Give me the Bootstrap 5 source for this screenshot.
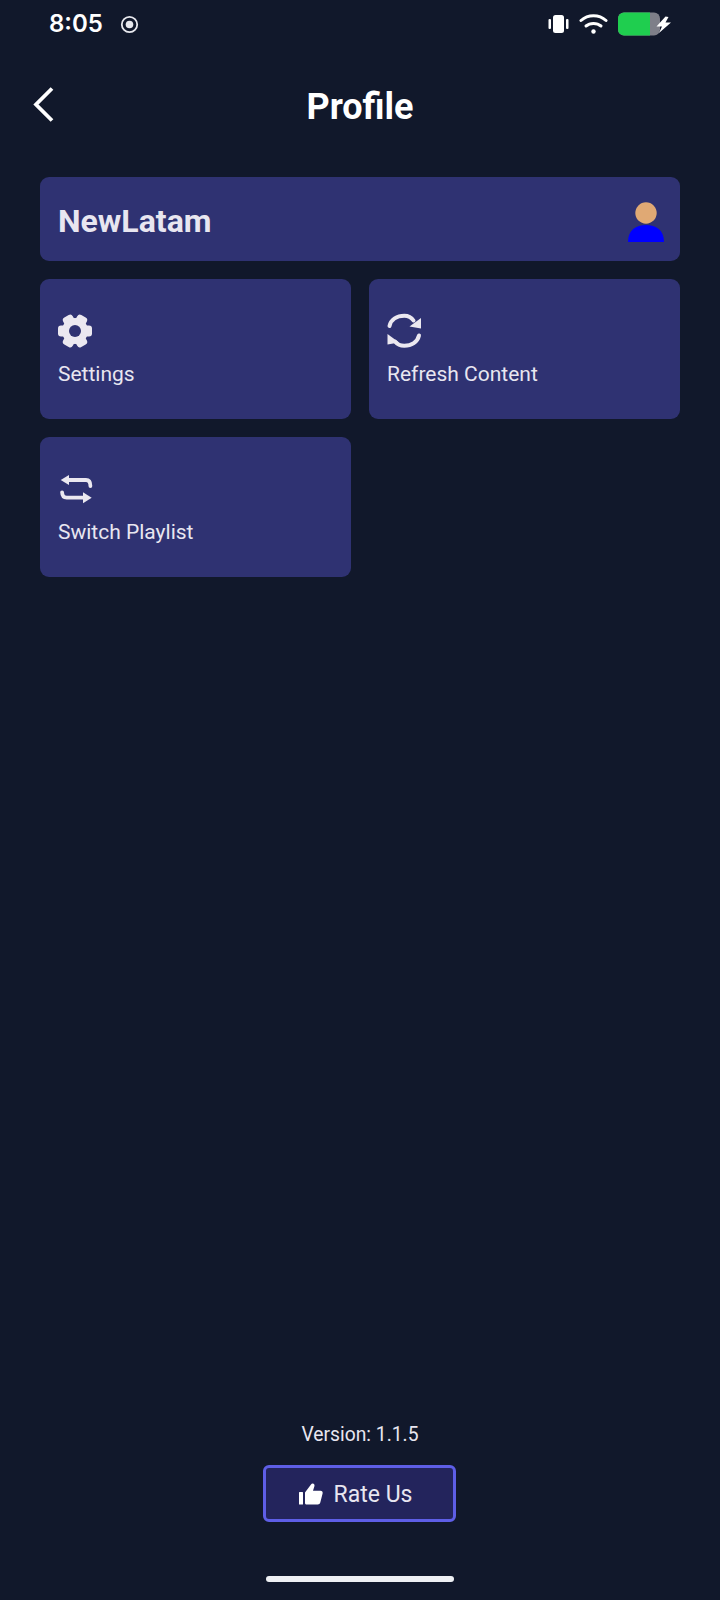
<!DOCTYPE html>
<html lang="en">
<head>
  <meta charset="UTF-8">
  <meta name="viewport" content="width=device-width, initial-scale=1.0">
  <title>Profile</title>
  <link href="https://cdn.jsdelivr.net/npm/bootstrap@5.3.0/dist/css/bootstrap.min.css" rel="stylesheet">
  <style>
    body {
      background-color: #11182b;
      font-family: Roboto, sans-serif;
      color: #e8e6f0;
    }
    .screen {
      height: 1600px;
      width: 720px;
      overflow: hidden;
    }
    .status-bar {
      height: 48px;
      padding: 0 49px 0 49px;
    }
    .status-left {
      gap: 17px;
    }
    .status-time {
      font-family: Inter, sans-serif;
      font-weight: 600;
      font-size: 24px;
      line-height: 1;
      color: #fff;
    }
    .status-right {
      gap: 10px;
    }
    .top-bar {
      height: 76px;
      margin-top: 21px;
    }
    .back-btn {
      position: absolute;
      left: 33px;
      top: 18px;
      line-height: 0;
    }
    .page-title {
      font-size: 36px;
      font-weight: 700;
      color: #fff;
      line-height: 1;
      margin: 0;
    }
    .content {
      padding: 32px 40px 0;
    }
    .user-box {
      height: 84px;
      background-color: #2f3272;
      border-radius: 9px;
      padding: 6px 16px 0 18px;
      margin-bottom: 18px;
    }
    .user-name {
      font-size: 32px;
      font-weight: 700;
      line-height: 1;
      margin-top: -3px;
    }
    .tiles {
      display: grid;
      grid-template-columns: 311px 311px;
      gap: 18px;
    }
    .tile {
      height: 140px;
      background-color: #2f3272;
      border-radius: 9px;
      padding: 33px 18px 0;
    }
    .tile svg {
      display: block;
      margin-bottom: 12px;
    }
    .tile-label {
      font-size: 21px;
      line-height: 28px;
    }
    .version {
      font-size: 19.3px;
      line-height: 22px;
      margin-bottom: 19px;
    }
    .rate-btn {
      width: 193px;
      height: 57px;
      background-color: #23245c;
      border: 3px solid #5e5ee6;
      border-radius: 6px;
      color: #e8e6f0;
      font-size: 23px;
      gap: 11px;
      padding: 4px 8px 0 0;
      margin-right: 1px;
    }
    .rate-btn svg {
      margin-top: -3px;
    }
    .home-bar {
      width: 188px;
      height: 6px;
      background-color: #eef0f4;
      border-radius: 3px;
      margin-top: 54px;
      margin-bottom: 18px;
    }
  </style>
</head>
<body>
  <div class="screen d-flex flex-column">
    <div class="status-bar d-flex align-items-center justify-content-between">
      <div class="status-left d-flex align-items-center">
        <span class="status-time">8:05</span>
        <svg width="19" height="19" viewBox="0 0 19 19"><circle cx="9.5" cy="9.5" r="7.7" fill="none" stroke="#e8e8ee" stroke-width="1.8"/><circle cx="9.5" cy="9.5" r="3.8" fill="#e8e8ee"/></svg>
      </div>
      <div class="status-right d-flex align-items-center">
        <svg width="21" height="20" viewBox="0 0 21 20" fill="#fff"><rect x="5" y="1" width="11" height="18" rx="2.5"/><rect x="0.5" y="5" width="2.5" height="10" rx="1"/><rect x="18" y="5" width="2.5" height="10" rx="1"/></svg>
        <svg width="29" height="22" viewBox="0 0 29 22" fill="none" stroke="#fff" stroke-width="3" stroke-linecap="round"><path d="M2 7.5C9 1 20 1 27 7.5"/><path d="M7 13C11 9.5 18 9.5 22 13"/><circle cx="14.5" cy="18.5" r="2.2" fill="#fff" stroke="none"/></svg>
        <svg width="53" height="24" viewBox="0 0 53 24"><rect x="0" y="0.5" width="42" height="23" rx="6" fill="#7e7f89"/><path d="M6 0.5H32V23.5H6A6 6 0 0 1 0 17.5V6.5A6 6 0 0 1 6 0.5Z" fill="#1fce4f"/><path d="M47.5 4.5L38.5 14.5H44L41 21L53 10.5H47.5L50.5 5Z" fill="#fff"/></svg>
      </div>
    </div>

    <div class="top-bar position-relative d-flex align-items-center justify-content-center">
      <div class="back-btn">
        <svg width="24" height="36" viewBox="0 0 24 36" fill="none" stroke="#fff" stroke-width="3.8"><path d="M19 1.5L3 17.5L19 33.5"/></svg>
      </div>
      <h1 class="page-title">Profile</h1>
    </div>

    <div class="content flex-grow-1">
      <div class="user-box d-flex align-items-center justify-content-between">
        <span class="user-name">NewLatam</span>
        <svg width="36" height="41" viewBox="0 0 36 41"><circle cx="18" cy="11" r="10.7" fill="#e0a974"/><path d="M0 40C0 28 8 23 18 23S36 28 36 40Z" fill="#0000ff"/></svg>
      </div>
      <div class="tiles">
        <div class="tile">
          <svg width="36" height="36" viewBox="0 0 36 36">
            <g fill="#ebe8f0">
              <circle cx="17" cy="19" r="13"/>
              <rect x="0" y="13.5" width="34" height="11" rx="3"/>
              <rect x="0" y="13.5" width="34" height="11" rx="3" transform="rotate(60 17 19)"/>
              <rect x="0" y="13.5" width="34" height="11" rx="3" transform="rotate(120 17 19)"/>
            </g>
            <circle cx="17" cy="19" r="6" fill="#2f3272"/>
          </svg>
          <div class="tile-label">Settings</div>
        </div>
        <div class="tile">
          <svg width="36" height="36" viewBox="0 0 36 36" fill="none" stroke="#ebe8f0" stroke-width="4" stroke-linecap="round"><path d="M2.5 14C4 7.5 10 3.8 17.3 3.8C21.5 3.8 24.5 5.5 26.5 8.5"/><path d="M32 23.5C30.5 30 24.5 33.8 17.3 33.8C13 33.8 10 32 8 29.5"/><path d="M34 6V16.5L22.5 14.5Z" fill="#ebe8f0" stroke="none"/><path d="M.5 22V32.5L12 30.5Z" fill="#ebe8f0" stroke="none"/></svg>
          <div class="tile-label">Refresh Content</div>
        </div>
        <div class="tile">
          <svg width="36" height="36" viewBox="0 0 36 36" fill="none" stroke="#ebe8f0" stroke-width="3.8" stroke-linecap="round"><path d="M8 10H28C31 10 32.4 12.5 32.4 16"/><path d="M4.1 22.3C4.2 25.5 5.7 27.7 8.7 27.7H27"/><path d="M11 5V15L2.7 10Z" fill="#ebe8f0" stroke="none"/><path d="M25 22.2V33.3L33.7 27.7Z" fill="#ebe8f0" stroke="none"/></svg>
          <div class="tile-label">Switch Playlist</div>
        </div>
      </div>
    </div>

    <div class="d-flex flex-column align-items-center">
      <div class="version">Version: 1.1.5</div>
      <button type="button" class="btn rate-btn d-flex align-items-center justify-content-center">
        <svg width="24" height="22" viewBox="0 0 24 22" fill="#fff"><rect x="0" y="9" width="4" height="12.5" rx="0.5"/><path d="M6 20V9.5L12 1.5C12.6 .6 13.6 .2 14.5 .7C15.5 1.2 15.7 2.2 15.4 3.2L14 7.8H21.5C23 7.8 24 9 23.6 10.4L21.3 19.5C21 20.8 20 21.5 18.8 21.5H8C6.8 21.5 6 21 6 20Z"/></svg>
        <span>Rate Us</span>
      </button>
      <div class="home-bar"></div>
    </div>
  </div>
  <script src="https://cdn.jsdelivr.net/npm/bootstrap@5.3.0/dist/js/bootstrap.bundle.min.js"></script>
</body>
</html>
